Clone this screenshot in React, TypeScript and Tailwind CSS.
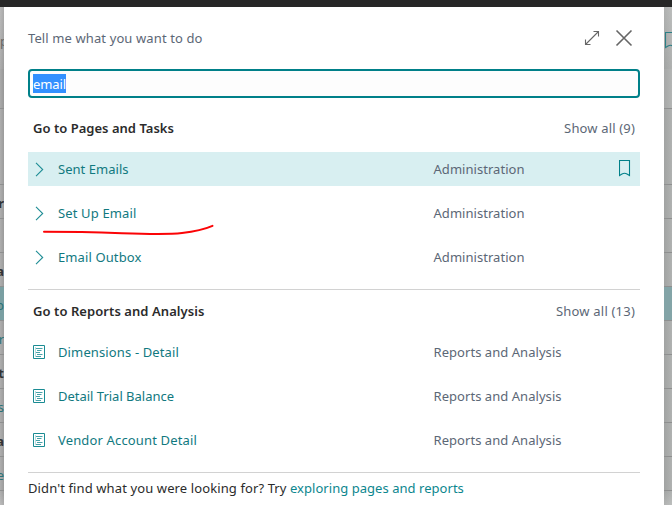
import type { ReactNode } from "react";

type Row = { label: string; tracking: string };

const pages: Row[] = [
  { label: "Sent Emails", tracking: "tracking-[0.03px]" },
  { label: "Set Up Email", tracking: "tracking-[0.14px]" },
  { label: "Email Outbox", tracking: "tracking-[0.11px]" },
];

const reports: Row[] = [
  { label: "Dimensions - Detail", tracking: "tracking-[0.13px]" },
  { label: "Detail Trial Balance", tracking: "tracking-[-0.01px]" },
  { label: "Vendor Account Detail", tracking: "tracking-[0.15px]" },
];

const leftCells = [
  { text: "r", style: "font-bold text-[#333]" },
  { text: "", style: "" },
  { text: "a", style: "font-bold text-[#333]" },
  { text: "p", style: "text-[#2b7377]" },
  { text: "r", style: "text-[#2b7377]" },
  { text: "t", style: "font-bold text-[#333]" },
  { text: "s", style: "text-[#2b7377]" },
  { text: "a", style: "font-bold text-[#333]" },
  { text: "e", style: "text-[#2b7377]" },
];

function Bookmark({ className }: { className: string }) {
  return (
    <svg className={className} width="12" height="17" viewBox="0 0 12 17" fill="none" stroke="currentColor" strokeWidth="1.1">
      <path d="M0.5 0.5h10v15L8 14q-2.5-1.4-5 0L0.5 15.5z" />
    </svg>
  );
}

function Chevron() {
  return (
    <svg width="10" height="15" viewBox="0 0 10 15" fill="none" stroke="#1f8d95" strokeWidth="1.1">
      <path d="M1 0.8 7.7 7.5 1 14.2" />
    </svg>
  );
}

function ReportIcon() {
  return (
    <svg width="12" height="14" viewBox="0 0 12 14" fill="none" stroke="#1a8b93">
      <path d="M0.5 0.5h11v13H0.5z" />
      <path d="M3 3.5h6.5M4 5.5h4.5M3 7.5h4M4 9.5h5.5M3 11.5h5" strokeOpacity="0.8" />
      <path d="M2.5 2v10" strokeOpacity="0.3" />
    </svg>
  );
}

function ResultRow({ row, icon, category, selected }: { row: Row; icon: ReactNode; category: ReactNode; selected?: boolean }) {
  return (
    <div className={`flex h-[34px] items-center ${selected ? "bg-[#d8eff1]" : ""}`}>
      <div className="flex w-[30px] pl-[5px]">{icon}</div>
      <div className={`w-[375.5px] text-[#11797f] ${row.tracking}`}>{row.label}</div>
      <div className="flex-1 text-[#5c6776]">{category}</div>
      {selected && <Bookmark className="mr-[9px] -mt-px text-[#008089]" />}
    </div>
  );
}

function SectionHeader({ title, showAll }: { title: ReactNode; showAll: ReactNode }) {
  return (
    <div className="flex h-5 items-center justify-between pl-[5px] pr-[5px]">
      <h2 className="font-semibold text-[#2b2b2b]">{title}</h2>
      <span className="text-[#5c6776]">{showAll}</span>
    </div>
  );
}

function Backdrop({ side }: { side: "left" | "right" }) {
  const left = side === "left";
  return (
    <div
      className={`relative h-full overflow-hidden whitespace-nowrap ${
        left ? "w-1 bg-linear-to-r from-[#aeaeae] to-[#9b9b9b]" : "w-2 bg-linear-to-r from-[#a1a3a2] to-[#b0b2b1]"
      }`}
    >
      <div className="flex h-[62px] items-start bg-linear-to-b from-white/15 to-transparent pt-6 leading-5 text-[#666]">
        {left ? <span>p</span> : <Bookmark className="-mr-3 ml-px mt-px shrink-0 text-[#2b7f86]" />}
      </div>
      <div className={`h-10 border-b border-[#8e8f8f] ${left ? "bg-black/2" : "bg-white/5"}`} />
      <div className="h-[76px] border-b border-[#8e8f8f]" />
      {leftCells.map((cell, i) => (
        <div
          key={i}
          className={`flex h-[34px] items-center justify-end border-b border-[#8e8f8f] pt-0.5 ${i === 3 ? (left ? "bg-[#7a9fa2]" : "bg-[#83a4a7]") : ""}`}
        >
          {left && <span className={cell.style}>{cell.text}</span>}
        </div>
      ))}
      <div className="h-4 bg-linear-to-b from-transparent to-white/20" />
    </div>
  );
}

export default function App() {
  return (
    <div className="flex h-[505px] w-[672px] flex-col overflow-hidden bg-[#a5a6a6] font-['Noto_Sans','Open_Sans',sans-serif] text-[13px] leading-5">
      <div className="h-[7px] shrink-0 bg-[#272727]" />
      <div className="flex h-[498px]">
        <Backdrop side="left" />
        <main className="flex w-[660px] flex-col bg-white px-6">
          <header className="flex h-[62px] items-center justify-between pr-[7px]">
            <h1 className="tracking-[0.11px] text-[#5c6776]">Tell me what you want to do</h1>
            <div className="flex items-center gap-[15px] text-[#666]">
              <svg width="16" height="16" viewBox="0 0 16 16" fill="none" stroke="currentColor" strokeWidth="1.1">
                <path d="M1.5 14.5 14.5 1.5M9.5 1.5h5v5M1.5 9.5v5h5" />
              </svg>
              <svg width="18" height="18" viewBox="0 0 18 18" fill="none" stroke="currentColor" strokeWidth="1.6">
                <path d="M1.5 1.5l15 15M16.5 1.5l-15 15" />
              </svg>
            </div>
          </header>
          <div className="flex h-[29px] items-center rounded-[4px] border-2 border-[#008089] bg-[#fdfdfd] pl-[3px]">
            <span className="h-[19px] w-[33px] bg-[#3390ff] leading-[21px] tracking-[-0.1px] text-white">email</span>
          </div>
          <section className="relative mt-5">
            <SectionHeader
              title={<span className="tracking-[0.02px]">Go to Pages and Tasks</span>}
              showAll={<span className="tracking-[0.16px]">Show all (9)</span>}
            />
            <div className="mt-[14px] flex flex-col gap-[10px]">
              {pages.map((row, i) => (
                <ResultRow
                  key={row.label}
                  row={row}
                  icon={<span className="ml-[2px]"><Chevron /></span>}
                  category={<span className="tracking-[0.04px]">Administration</span>}
                  selected={i === 0}
                />
              ))}
            </div>
            <svg className="absolute left-[14px] top-[105px]" width="174" height="14" viewBox="0 0 174 14" fill="none" stroke="#fb0406" strokeWidth="2" strokeLinecap="round">
              <path d="M2 8.8 C28 8.8 56 9.4 80 10.2 C104 11 127 11.5 140 10 C153 8.5 162 6.5 170.5 2.8" />
            </svg>
          </section>
          <section className="mt-[15px] border-t border-[#d2d2d2] pt-[11px]">
            <SectionHeader
              title={<span className="tracking-[0.07px]">Go to Reports and Analysis</span>}
              showAll={<span className="tracking-[0.2px]">Show all (13)</span>}
            />
            <div className="mt-[14px] flex flex-col gap-[10px]">
              {reports.map((row) => (
                <ResultRow
                  key={row.label}
                  row={row}
                  icon={<ReportIcon />}
                  category={<span className="tracking-[0.05px]">Reports and Analysis</span>}
                />
              ))}
            </div>
          </section>
          <footer className="mt-[15px] flex border-t border-[#d2d2d2] pt-[5px] text-[#2b2b2b]">
            <span className="w-[262px] tracking-[0.11px]">Didn&apos;t find what you were looking for? Try</span>
            <a className="tracking-[0.04px] text-[#0c868e]">exploring pages and reports</a>
          </footer>
        </main>
        <Backdrop side="right" />
      </div>
    </div>
  );
}
